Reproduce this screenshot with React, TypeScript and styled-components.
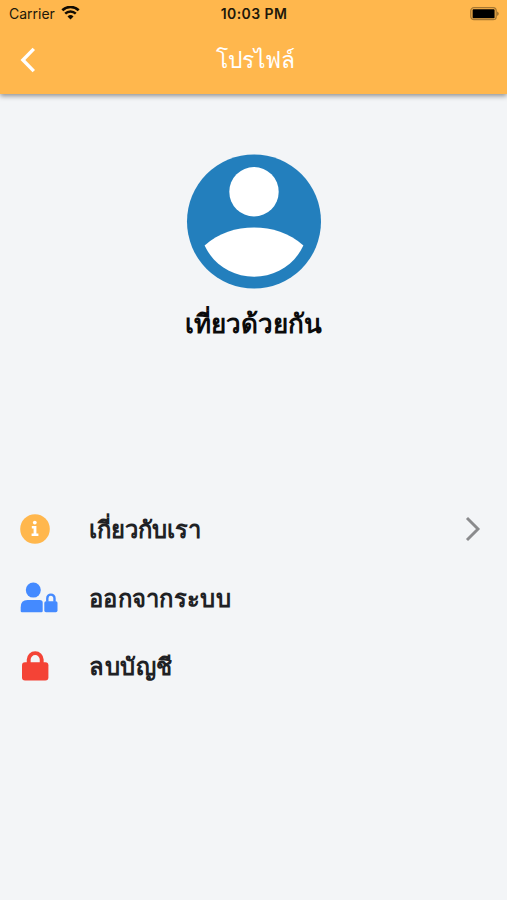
import React from "react";
import styled, { createGlobalStyle } from "styled-components";

const GlobalStyle = createGlobalStyle`
  * { box-sizing: border-box; }
  body { margin: 0; background: #f3f5f7; }
`;

const Screen = styled.div`
  display: flex;
  flex-direction: column;
  width: 100%;
  height: 900px;
  overflow: hidden;
  background: #f3f5f7;
  font-family: "Noto Sans", sans-serif;
`;

const Header = styled.header`
  flex: none;
  height: 94px;
  background: #ffb74d;
  box-shadow: 0 2px 5px rgba(0, 0, 0, 0.42);
`;

const StatusBar = styled.div`
  display: grid;
  grid-template-columns: 1fr auto 1fr;
  align-items: center;
  height: 27px;
  padding: 0 8px 0 9px;
  font: 400 14px/27px Inter, sans-serif;
  color: #21180a;
`;

const Carrier = styled.div`
  display: flex;
  align-items: center;
  gap: 6px;
`;

const Clock = styled.div`
  font-weight: 600;
  letter-spacing: 0.4px;
`;

const BatteryIcon = styled.svg`
  justify-self: end;
`;

const NavBar = styled.div`
  display: grid;
  grid-template-columns: 56px 1fr 55px;
  align-items: center;
  height: 66px;
`;

const BackButton = styled.button`
  display: flex;
  align-items: center;
  height: 56px;
  padding: 0 0 0 20px;
  border: 0;
  background: none;
`;

const Title = styled.h1`
  margin: 0 0 1px;
  padding-left: 2px;
  text-align: center;
  font-size: 22.8px;
  line-height: 34px;
  font-weight: 500;
  color: #fff;
`;

const Profile = styled.section`
  display: flex;
  flex-direction: column;
  align-items: center;
  height: 401px;
  padding-top: 60px;
`;

const Name = styled.h2`
  margin: 13px 0 0;
  font-size: 26px;
  line-height: 40px;
  font-weight: 700;
  color: #0b0b0b;
`;

const Menu = styled.nav`
  display: flex;
  flex-direction: column;
`;

const MenuItem = styled.button`
  display: grid;
  grid-template-columns: 69px 1fr auto;
  align-items: center;
  height: 68.5px;
  padding: 0 26px 0 20px;
  border: 0;
  background: none;
  font-family: inherit;
  text-align: left;
`;

const ItemIcon = styled.span<{ $color: string; $width?: number }>`
  display: flex;
  color: ${(p) => p.$color};

  svg {
    width: ${(p) => p.$width ?? 30}px;
    height: 30px;
    overflow: visible;
  }
`;

const Label = styled.span<{ $spacing?: number }>`
  font-size: 23.8px;
  line-height: 36px;
  font-weight: 600;
  letter-spacing: ${(p) => p.$spacing ?? 0}px;
  color: #202124;
`;

function InfoIcon() {
  return (
    <svg viewBox="0 0 30 30">
      <circle cx="15" cy="15" r="14.8" fill="currentColor" />
      <circle cx="14.8" cy="8.6" r="1.9" fill="#fff" />
      <path d="M11.8 12h4.6v7.5h2V22h-6.8v-2.5h2v-5h-1.8Z" fill="#fff" />
    </svg>
  );
}

function UserLockIcon() {
  return (
    <svg viewBox="0 0 38 30">
      <circle cx="13.3" cy="7.100" r="7.500" fill="currentColor" />
      <path d="M7.5 17h12.2q3 0 3 2.7v8.200q0 1.300-1.300 1.300H2Q.7 29.200.7 27.900V24.200q0-7.200 6.800-7.200Z" fill="currentColor" />
      <rect x="24.3" y="18.2" width="13.2" height="11" rx="1.7" fill="currentColor" />
      <path d="M27.3 18.7v-3.500a3.600 3.600 0 0 1 7.200 0v3.500" fill="none" stroke="currentColor" strokeWidth="2.4" />
    </svg>
  );
}

function LockIcon() {
  return (
    <svg viewBox="0 0 30 30">
      <rect x="2" y="11.2" width="26.4" height="18.4" rx="3" fill="currentColor" />
      <path d="M8.7 12V8.600a6.500 6.500 0 0 1 13 0V12" fill="none" stroke="currentColor" strokeWidth="3.9" />
    </svg>
  );
}

export default function App() {
  return (
    <Screen>
      <GlobalStyle />
      <Header>
        <StatusBar>
          <Carrier>
            <span>Carrier</span>
            <svg width="19" height="15" viewBox="0 0 19 15" fill="none" stroke="#120c02">
              <path d="M1.3 4.3a11.8 11.8 0 0 1 16.4 0" strokeWidth="2.6" />
              <path d="M4.2 7.7a7.6 7.6 0 0 1 10.6 0" strokeWidth="2.5" />
              <path d="M9.5 13.6 6.5 10.5a4.300 4.300 0 0 1 6 0Z" fill="#120c02" stroke="none" />
            </svg>
          </Carrier>
          <Clock>10:03 PM</Clock>
          <BatteryIcon width="29" height="14" viewBox="0 0 29 14">
            <rect x="0.8" y="0.7" width="25.4" height="12" rx="3.2" fill="none" stroke="#a67732" strokeWidth="1.3" />
            <rect x="2.6" y="2.2" width="22" height="9" rx="0.8" fill="#000" />
            <path d="M27 4.6c2.400 1 2.400 3.200 0 4.200Z" fill="#a67732" />
          </BatteryIcon>
        </StatusBar>
        <NavBar>
          <BackButton aria-label="Back">
            <svg width="16" height="26" viewBox="0 0 16 26" fill="none" stroke="#fff" strokeWidth="3.4">
              <path d="M13.8 1.9 2.9 13l10.900 11.100" />
            </svg>
          </BackButton>
          <Title>โปรไฟล์</Title>
        </NavBar>
      </Header>
      <Profile>
        <svg width="136" height="136" viewBox="0 0 136 136">
          <circle cx="68" cy="67.5" r="67" fill="#237fbd" />
          <circle cx="68" cy="37.7" r="24.7" fill="#fff" />
          <path d="M18.6 91.6C33 79 50 73.600 68 73.600s35 5.400 49.400 18C108 111.500 89 122.700 68 122.700S28 111.500 18.600 91.600Z" fill="#fff" />
        </svg>
        <Name>เที่ยวด้วยกัน</Name>
      </Profile>
      <Menu>
        <MenuItem>
          <ItemIcon $color="#ffb74d">
            <InfoIcon />
          </ItemIcon>
          <Label>เกี่ยวกับเรา</Label>
          <svg width="16" height="26" viewBox="0 0 16 26" fill="none" stroke="#8a8b8d" strokeWidth="2.9">
            <path d="M2 2l11 11L2 24" />
          </svg>
        </MenuItem>
        <MenuItem>
          <ItemIcon $color="#448aff" $width={38}>
            <UserLockIcon />
          </ItemIcon>
          <Label $spacing={0.3}>ออกจากระบบ</Label>
        </MenuItem>
        <MenuItem>
          <ItemIcon $color="#f44336">
            <LockIcon />
          </ItemIcon>
          <Label $spacing={0.5}>ลบบัญชี</Label>
        </MenuItem>
      </Menu>
    </Screen>
  );
}
